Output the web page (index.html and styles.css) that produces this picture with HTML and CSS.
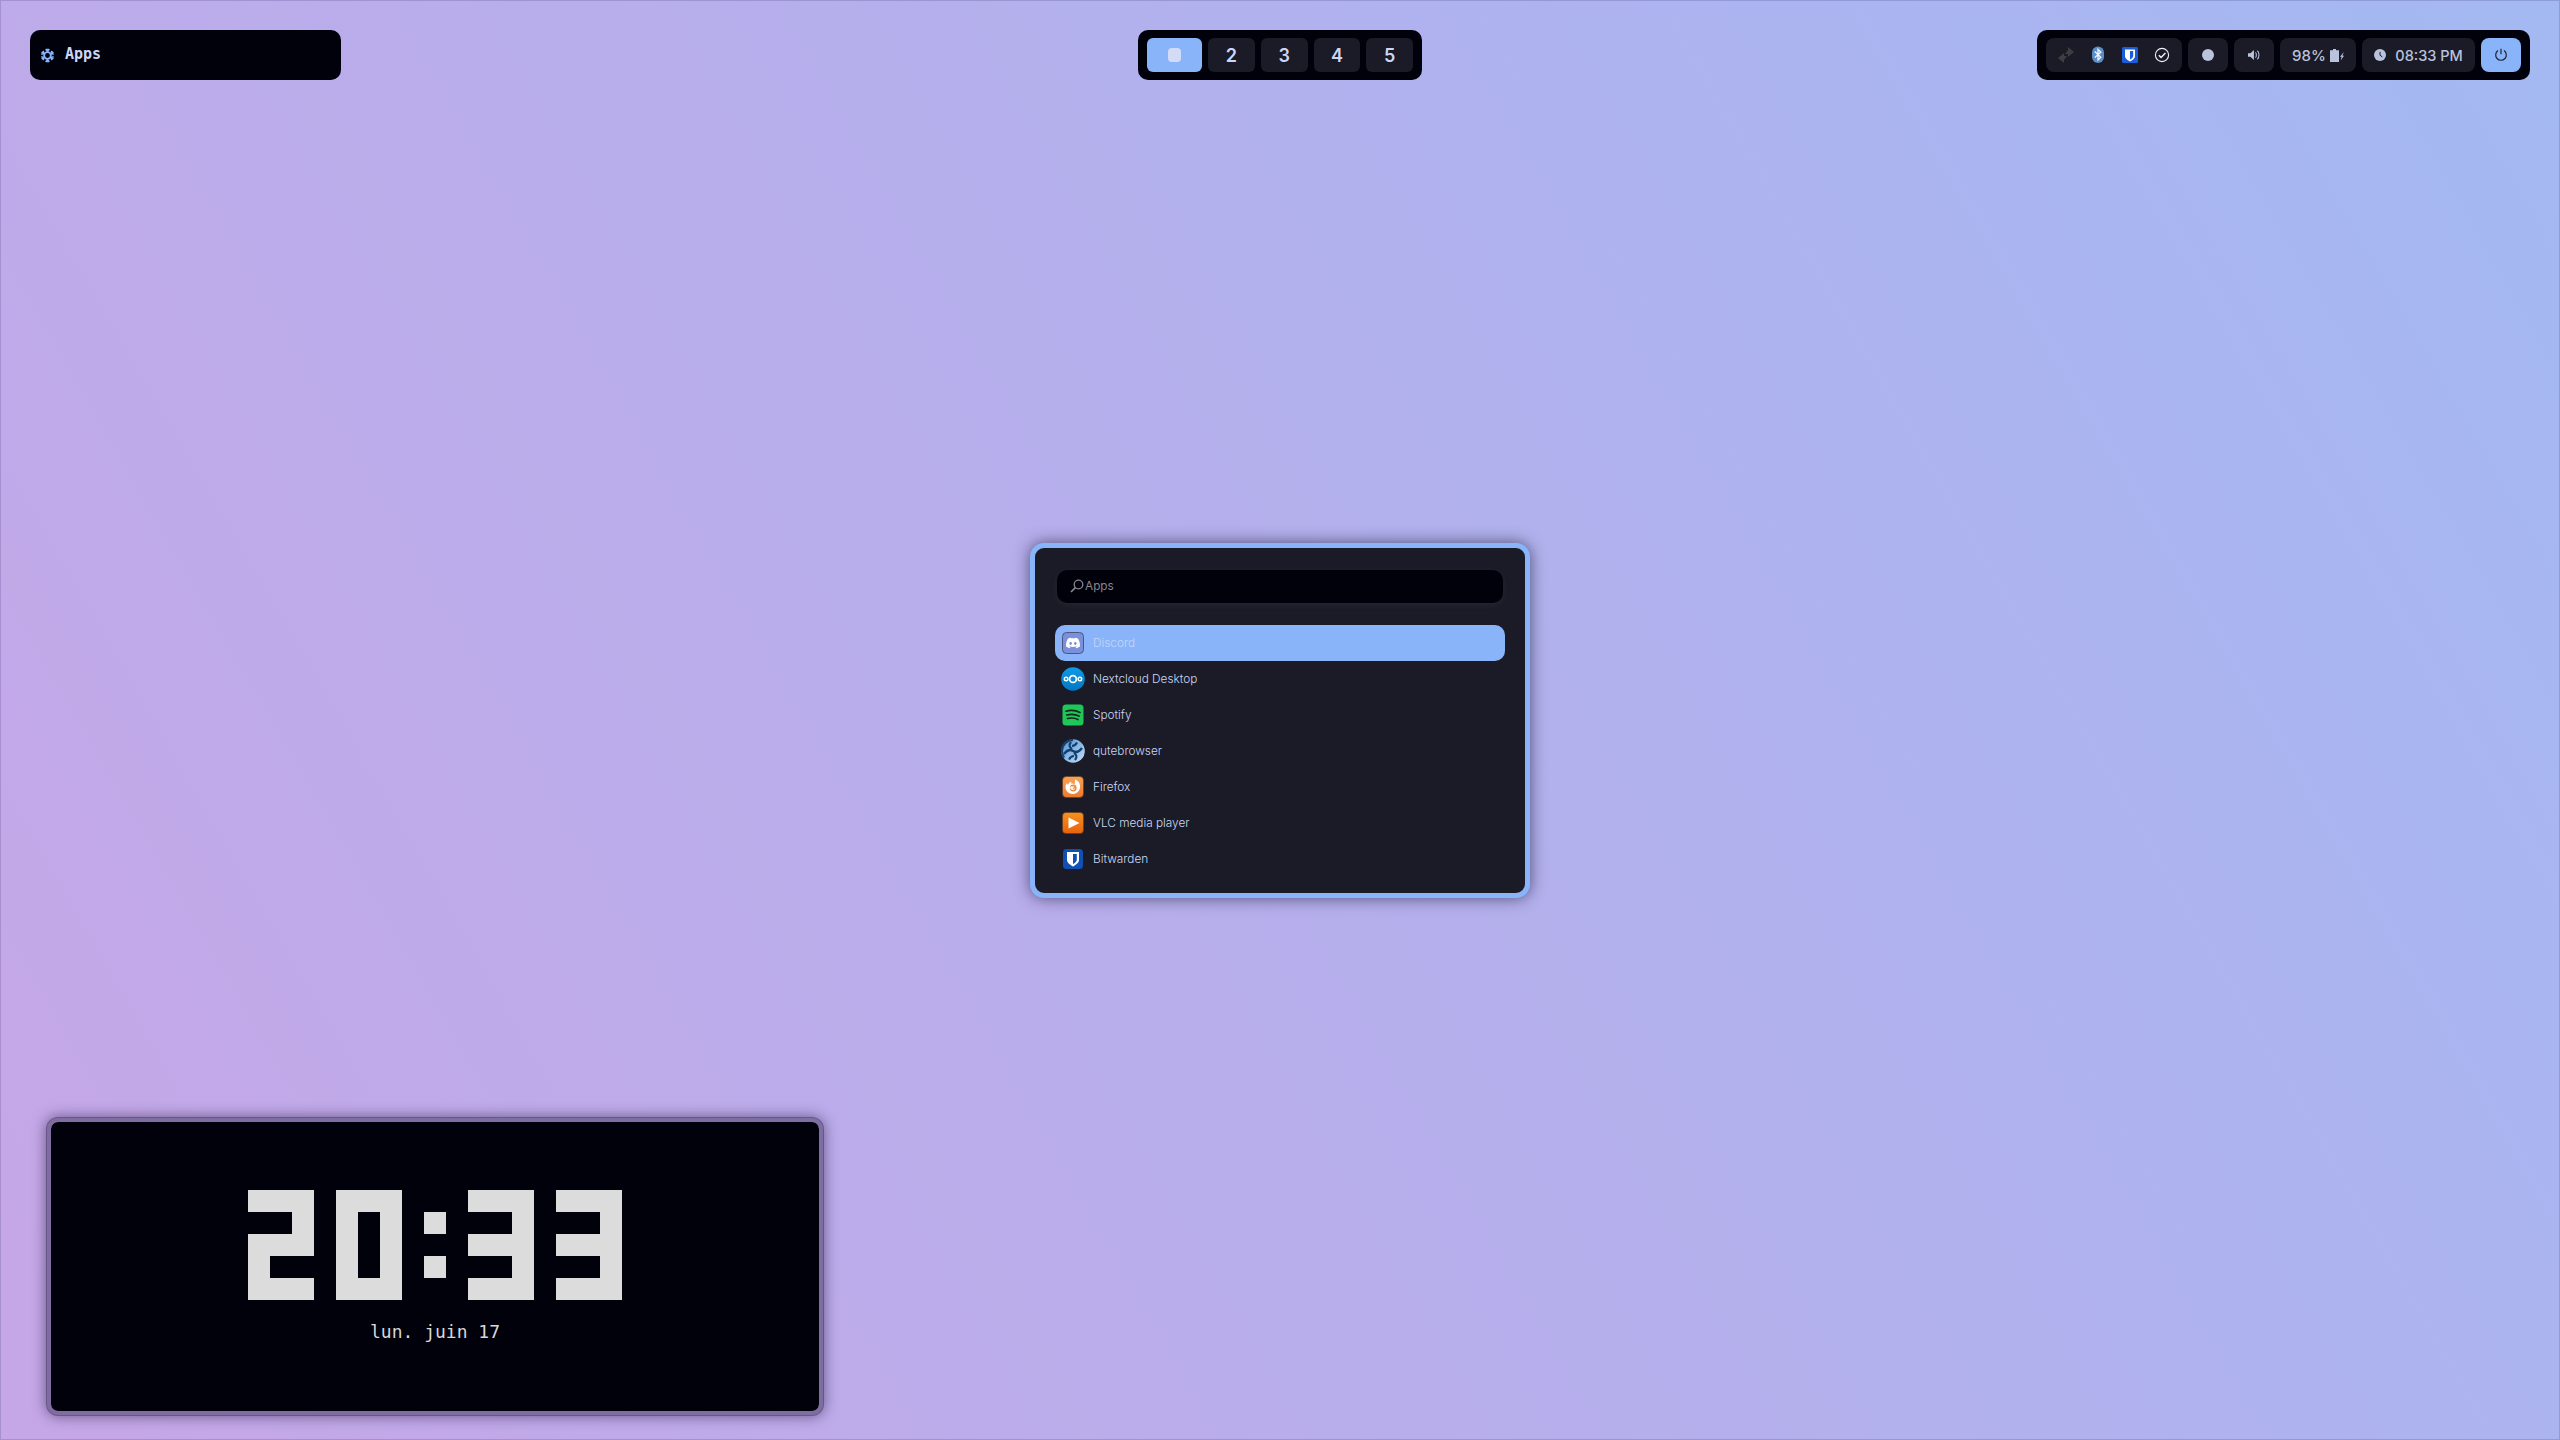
FILE: index.html
```html
<!DOCTYPE html>
<html lang="fr">
<head>
  <meta charset="UTF-8" />
  <title>Desktop</title>
  <link rel="stylesheet" href="styles.css">
</head>
<body>
  <header class="topbar">
    <div class="bar bar-left">
      <svg class="snow" viewBox="0 0 16 16" fill="none" stroke="#89b4fa" stroke-width="1.7">
        <circle cx="8" cy="8" r="3.6" stroke-width="2"/>
        <path d="M8 4.4V.8M6 1.2l2 2 2-2M8 11.6v3.6M6 14.8l2-2 2 2M4.9 6.2L1.7 4.4M1.4 6.6l2.7-.8-.7-2.7M11.1 9.8l3.2 1.8M14.6 9.4l-2.7.8.7 2.7M4.9 9.8l-3.2 1.8M3.4 12.9l.7-2.7-2.7-.8M11.1 6.2l3.2-1.8M12.6 3.1l-.7 2.7 2.7.8"/>
      </svg>
      <span class="bar-title">Apps</span>
    </div>

    <div class="bar bar-center">
      <button class="ws active"><span class="ws-dot"></span></button>
      <button class="ws">2</button>
      <button class="ws">3</button>
      <button class="ws">4</button>
      <button class="ws">5</button>
    </div>

    <div class="bar bar-right">
      <div class="pill tray">
        <svg class="tray-icon" viewBox="0 0 20 20" fill="#3d3d42">
          <path d="M2 13l6-5v3h3l-3 4v3z"/>
          <path d="M18 7l-6 5V9H9l3-4V2z"/>
        </svg>
        <svg class="tray-icon" viewBox="0 0 20 20">
          <rect x="4" y="1.5" width="12" height="16.5" rx="6" fill="#5b8ec8"/>
          <path d="M6.8 6.6l6 5.6L10 15V4.4l2.800 2.900-6 5.300" fill="none" stroke="#f2f5fb" stroke-width="1.3"/>
        </svg>
        <svg class="tray-icon" viewBox="0 0 20 20">
          <rect x="2" y="2" width="16" height="16" rx="1.5" fill="#175ddc"/>
          <path d="M5 4.500h10V11c0 2.600-2.800 4.400-5 5.500-2.200-1.100-5-2.900-5-5.500z" fill="#fff"/>
          <path d="M10 6v8.600c1.500-.9 3.200-2.200 3.200-3.700V6z" fill="#175ddc"/>
        </svg>
        <svg class="tray-icon" viewBox="0 0 20 20" fill="none" stroke="#eef1f8">
          <circle cx="10" cy="10" r="6.6" stroke-width="1.1"/>
          <path d="M6.800 10.200l2.300 2.200 4.300-4.400" stroke-width="1.500"/>
        </svg>
      </div>
      <div class="pill square"><span class="dot"></span></div>
      <div class="pill square">
        <svg class="vol" viewBox="0 0 14 12" fill="#bac2de">
          <path d="M0 4h2.600L6.400.6v10.800L2.600 8H0z"/>
          <path d="M8 3.200c1.300.8 1.300 4.800 0 5.600M10 1.400c2.400 1.400 2.400 7.800 0 9.200" fill="none" stroke="#bac2de" stroke-width="1.100"/>
        </svg>
      </div>
      <div class="pill battery">
        <span>98%</span>
        <svg class="batt" viewBox="0 0 14 13" fill="#bac2de">
          <path d="M3 0h3v1.200h3V13H0V1.200h3z"/>
          <path d="M13.800 3L10 7.800h1.600l-.9 3.700L14 6.800h-1.600z"/>
        </svg>
      </div>
      <div class="pill clock-pill">
        <svg class="clock-icon" viewBox="0 0 12 12">
          <circle cx="6" cy="6" r="6" fill="#bac2de"/>
          <path d="M6 2.800v3.400L8.400 8" fill="none" stroke="#1a1b26" stroke-width="1"/>
        </svg>
        <span>08:33 PM</span>
      </div>
      <div class="pill power">
        <svg class="power-icon" viewBox="0 0 14 14" fill="none" stroke="#1f2433" stroke-width="1.200">
          <path d="M4 2.600a5.300 5.300 0 1 0 6 0M7 .8v5.400"/>
        </svg>
      </div>
    </div>
  </header>

  <main class="launcher">
    <div class="search">
      <svg class="search-icon" viewBox="0 0 14 14" fill="none" stroke="#85868f" stroke-width="1.300">
        <circle cx="8.500" cy="5.500" r="4.300"/>
        <path d="M5.400 8.600L1 13" stroke-width="1.700"/>
      </svg>
      <span>Apps</span>
    </div>
    <ul class="apps">
      <li class="app selected">
        <svg class="app-icon" viewBox="0 0 24 24">
          <rect x="1.500" y="1.500" width="21" height="21" rx="4" fill="#7b8fdb" stroke="#4d5680"/>
          <svg x="5" y="5" width="14" height="14" viewBox="0 0 24 24">
            <path fill="#fff" d="M20.317 4.3698a19.7913 19.7913 0 00-4.8851-1.5152.0741.0741 0 00-.0785.0371c-.211.3753-.4447.8648-.6083 1.2495-1.8447-.2762-3.68-.2762-5.4868 0-.1636-.3933-.4058-.8742-.6177-1.2495a.077.077 0 00-.0785-.037 19.7363 19.7363 0 00-4.8852 1.515.0699.0699 0 00-.0321.0277C.5334 9.0458-.319 13.5799.0992 18.0578a.0824.0824 0 00.0312.0561c2.0528 1.5076 4.0413 2.4228 5.9929 3.0294a.0777.0777 0 00.0842-.0276c.4616-.6304.8731-1.2952 1.226-1.9942a.076.076 0 00-.0416-.1057c-.6528-.2476-1.2743-.5495-1.8722-.8923a.077.077 0 01-.0076-.1277c.1258-.0943.2517-.1923.3718-.2914a.0743.0743 0 01.0776-.0105c3.9278 1.7933 8.18 1.7933 12.0614 0a.0739.0739 0 01.0785.0095c.1202.099.246.1981.3728.2924a.077.077 0 01-.0066.1276 12.2986 12.2986 0 01-1.873.8914.0766.0766 0 00-.0407.1067c.3604.698.7719 1.3628 1.225 1.9932a.076.076 0 00.0842.0286c1.961-.6067 3.9495-1.5219 6.0023-3.0294a.077.077 0 00.0313-.0552c.5004-5.177-.8382-9.6739-3.5485-13.6604a.061.061 0 00-.0312-.0286zM8.02 15.3312c-1.1825 0-2.1569-1.0857-2.1569-2.419 0-1.3332.9555-2.4189 2.157-2.4189 1.2108 0 2.1757 1.0952 2.1568 2.419 0 1.3332-.9555 2.4189-2.1569 2.4189zm7.9748 0c-1.1825 0-2.1569-1.0857-2.1569-2.419 0-1.3332.9554-2.4189 2.1569-2.4189 1.2108 0 2.1757 1.0952 2.1568 2.419 0 1.3332-.946 2.4189-2.1568 2.4189Z"/>
          </svg>
        </svg>
        <span>Discord</span>
      </li>
      <li class="app">
        <svg class="app-icon" viewBox="0 0 24 24">
          <defs><linearGradient id="ncGrad" x1="0" y1="0" x2="0" y2="1"><stop offset="0" stop-color="#0e9be8"/><stop offset="1" stop-color="#0277c4"/></linearGradient></defs>
          <circle cx="12" cy="12" r="11.8" fill="url(#ncGrad)"/>
          <g fill="none" stroke="#fff">
            <circle cx="12" cy="12" r="3.4" stroke-width="1.700"/>
            <circle cx="5.100" cy="12" r="1.800" stroke-width="1.400"/>
            <circle cx="18.900" cy="12" r="1.800" stroke-width="1.400"/>
          </g>
        </svg>
        <span>Nextcloud Desktop</span>
      </li>
      <li class="app">
        <svg class="app-icon" viewBox="0 0 24 24">
          <rect x="1.500" y="1.500" width="21" height="21" rx="3.500" fill="#1ec758"/>
          <path d="M5 8.200c4.500-1.300 9.500-1 14 1.200M5.800 12c3.800-1 8.500-.8 12.300 1.100M6.500 15.500c3.300-.8 7.300-.6 10.500 1" fill="none" stroke="#14261b" stroke-width="1.700" stroke-linecap="round"/>
        </svg>
        <span>Spotify</span>
      </li>
      <li class="app">
        <svg class="app-icon" viewBox="0 0 24 24">
          <defs><linearGradient id="quteGrad" x1="0" y1="0" x2="1" y2="1"><stop offset="0" stop-color="#4f8fd0"/><stop offset="1" stop-color="#c4e0f8"/></linearGradient></defs>
          <circle cx="12" cy="12" r="11.8" fill="url(#quteGrad)"/>
          <path d="M12 1A11 11 0 0 0 1 12c0 2.500.8 4.700 2.200 6.500" fill="none" stroke="#12406f" stroke-width="2"/>
          <path d="M3 15c3-4 6-5 9-3s6 1 9-3M10 3C7.500 6 8.500 8.500 11 10M14 21c2.500-3 1.500-5.500-1-7M16 3.500c-1 2-3 3.500-5 3.500M8 20.500c1-2 3-3.500 5-3.500" fill="none" stroke="#12406f" stroke-width="2.200"/>
        </svg>
        <span>qutebrowser</span>
      </li>
      <li class="app">
        <svg class="app-icon" viewBox="0 0 24 24">
          <defs><linearGradient id="ffGrad" x1="0" y1="0" x2="0" y2="1"><stop offset="0" stop-color="#f9a255"/><stop offset="1" stop-color="#ee7a2a"/></linearGradient></defs>
          <rect x="1.500" y="1.500" width="21" height="21" rx="4" fill="url(#ffGrad)" stroke="#5c3a25" stroke-width=".6"/>
          <path d="M14 4.500c3.500 1 5.500 4.300 5 8-.5 3.900-3.600 6.500-7.300 6.500-4 0-7.200-3-7.200-7 0-1.600.5-3 1.300-4.100.2.800.6 1.400 1.200 1.800.5-1.500 1.800-2.800 3.500-3.300-.5.900-.5 1.500-.1 2.100 1.600 0 2.900.4 3.300 1.200z" fill="#fff"/>
          <circle cx="12.200" cy="13" r="3.400" fill="#f08a3c"/>
          <path d="M9.500 11.500h3.800c.3.900-1 1.200-1.900 1.500.3.900 1.600 1 2.600.3-.3 1.500-2.200 2.200-3.600 1.300-1-.7-1.400-2-.9-3.100z" fill="#fff"/>
        </svg>
        <span>Firefox</span>
      </li>
      <li class="app">
        <svg class="app-icon" viewBox="0 0 24 24">
          <defs><linearGradient id="vlcGrad" x1="0" y1="0" x2="0" y2="1"><stop offset="0" stop-color="#f6911e"/><stop offset="1" stop-color="#e8620e"/></linearGradient></defs>
          <rect x="1.500" y="1.500" width="21" height="21" rx="3.500" fill="url(#vlcGrad)" stroke="#5c3a25" stroke-width=".6"/>
          <path d="M7.500 6.500L18.500 12l-11 5.500z" fill="#fff"/>
        </svg>
        <span>VLC media player</span>
      </li>
      <li class="app">
        <svg class="app-icon" viewBox="0 0 24 24">
          <rect x="2" y="2" width="20" height="20" rx="3.500" fill="#0f50b4"/>
          <path d="M6 5h12v8c0 2.800-3.500 5-6 6.500-2.500-1.500-6-3.700-6-6.500z" fill="#fff"/>
          <path d="M12 7v10c1.800-1.100 3.800-2.500 3.800-4.300V7z" fill="#0f50b4"/>
        </svg>
        <span>Bitwarden</span>
      </li>
    </ul>
  </main>

  <section class="clock-card">
    <div class="digits" role="img" aria-label="20:33">
      <div class="digit two"><i></i><i></i></div>
      <div class="digit zero"><i></i></div>
      <div class="colon"><i></i><i></i></div>
      <div class="digit three"><i></i><i></i></div>
      <div class="digit three"><i></i><i></i></div>
    </div>
    <div class="date">lun. juin 17</div>
  </section>
</body>
</html>
```

FILE: styles.css
```css
* { box-sizing: border-box; }

html, body { height: 100%; }

body {
  margin: 0;
  height: 1440px;
  display: grid;
  grid-template: 1fr / 1fr;
  overflow: hidden;
  font-family: "Inter", "Liberation Sans", sans-serif;
  color: #cdd6f4;
  background: linear-gradient(60deg, #c5a7e7 4%, #a4b8f2 98%);
  box-shadow: inset 0 0 0 1px rgba(70, 60, 130, 0.22);
}

/* top bar */
.topbar {
  grid-area: 1 / 1;
  align-self: start;
  display: grid;
  grid-template-columns: 1fr auto 1fr;
  padding: 30px 30px 0;
}

.bar {
  height: 50px;
  background: #01010c;
  border-radius: 10px;
  display: flex;
  align-items: center;
}

.bar-left {
  width: 311px;
  padding-left: 10px;
  gap: 10px;
}

.snow { width: 15px; height: 15px; }

.bar-title {
  margin-bottom: 2px;
  font-family: "DejaVu Sans Mono", monospace;
  font-weight: bold;
  font-size: 15px;
  color: #cdd6f4;
}

.bar-center {
  padding: 0 9px;
  gap: 6px;
}

.ws {
  width: 46.75px;
  height: 34px;
  border: 0;
  padding: 0;
  border-radius: 6px;
  background: #1a1b26;
  color: #cdd6f4;
  font-family: inherit;
  font-size: 18px;
  font-weight: 600;
  display: flex;
  align-items: center;
  justify-content: center;
}

.ws.active { width: 55px; background: #89b4fa; }

.ws-dot {
  width: 13px;
  height: 14px;
  border-radius: 4px;
  background: #d2dcf6;
}

.bar-right {
  justify-self: end;
  padding: 0 9px;
  gap: 6px;
}

.pill {
  height: 34px;
  border-radius: 8px;
  background: #1a1b26;
  color: #bac2de;
  font-size: 14.5px;
  font-weight: 500;
  display: flex;
  align-items: center;
  justify-content: center;
}

.tray { width: 136px; gap: 12px; }
.tray-icon { width: 20px; height: 20px; }
.square { width: 40px; }
.dot { width: 12px; height: 12px; border-radius: 50%; background: #bac2de; }
.vol { width: 13px; height: 12px; }
.battery { width: 76px; gap: 4px; font-size: 15px; }
.batt { width: 14px; height: 13px; }
.clock-pill { width: 113px; gap: 9px; }
.clock-icon { width: 12px; height: 12px; }
.power { width: 40px; background: #89b4fa; }
.power-icon { width: 14px; height: 14px; }

/* launcher */
.launcher {
  grid-area: 1 / 1;
  align-self: center;
  justify-self: center;
  width: 500px;
  height: 355px;
  padding: 22px 20px 16px;
  background: #1a1b26;
  border: 5px solid #89b4fa;
  border-radius: 14px;
  box-shadow: 0 0 16px rgba(35, 35, 70, 0.7);
}

.search {
  height: 33px;
  margin: 0 2px 22px;
  padding-left: 13px;
  display: flex;
  align-items: center;
  gap: 1px;
  border-radius: 10px;
  background: #01010c;
  box-shadow: 0 2px 6px rgba(120, 120, 160, 0.12);
  color: #85868f;
  font-size: 11.8px;
}

.search-icon { width: 14px; height: 14px; }

.apps {
  list-style: none;
  margin: 0;
  padding: 0;
}

.app {
  height: 36px;
  padding-left: 6px;
  display: flex;
  align-items: center;
  gap: 8px;
  border-radius: 10px;
  font-size: 11.8px;
  font-weight: 300;
  color: #cdd6f4;
}

.app.selected { background: #89b4fa; color: #c4d4f9; }
.app-icon { width: 24px; height: 24px; flex: none; }

/* clock widget */
.clock-card {
  grid-area: 1 / 1;
  align-self: end;
  justify-self: start;
  width: 778px;
  height: 299px;
  margin: 0 0 24px 46px;
  padding-top: 68px;
  display: flex;
  flex-direction: column;
  align-items: center;
  background: #01010c;
  background-clip: padding-box;
  border: 5px solid rgba(60, 50, 90, 0.5);
  border-radius: 12px;
  box-shadow: 0 0 14px rgba(40, 30, 70, 0.6);
}

.digits { display: flex; gap: 22px; }

.digit {
  display: grid;
  grid-template: repeat(5, 22px) / repeat(3, 22px);
  background: #dcdcdc;
}

.digit i { background: #01010c; }

.two i:first-child { grid-area: 2 / 1 / 3 / 3; }
.two i:last-child { grid-area: 4 / 2 / 5 / 4; }
.zero i { grid-area: 2 / 2 / 5 / 3; }
.three i:first-child { grid-area: 2 / 1 / 3 / 3; }
.three i:last-child { grid-area: 4 / 1 / 5 / 3; }

.colon {
  width: 22px;
  padding-top: 22px;
  display: flex;
  flex-direction: column;
  gap: 22px;
}

.colon i { height: 22px; background: #dcdcdc; }

.date {
  margin-top: 20px;
  font-family: "DejaVu Sans Mono", monospace;
  font-size: 18px;
  line-height: 24px;
  color: #d8d8d8;
}
```
